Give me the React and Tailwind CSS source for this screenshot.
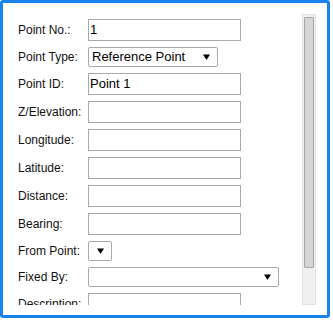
import React from 'react';

// small select arrow, like the native windows one
const Arrow = () => (
    <svg width="7" height="6" viewBox="0 0 7 6" className="shrink-0">
        <polygon points="0,0.5 7,0.5 3.5,6" fill="#000" />
    </svg>
);

const TextBox = ({ value = '', width = 'w-[153px]' }) => (
    <div className={`${width} h-[22px] border border-[#a9a9a9] bg-white pl-[1px] flex items-center text-[13px] text-black`}>
        {value}
    </div>
);

const SelectBox = ({ value = '', width }) => (
    <div className={`${width} h-[20px] border border-[#a9a9a9] rounded-[2px] bg-white pl-[3px] pr-[7px] flex items-center justify-between text-[13px] text-black`}>
        <span>{value}</span>
        <Arrow />
    </div>
);

const fields = [
    { label: 'Point No.:', kind: 'text', value: '1' },
    { label: 'Point Type:', kind: 'select', value: 'Reference Point', width: 'w-[130px]' },
    { label: 'Point ID:', kind: 'text', value: 'Point 1' },
    { label: 'Z/Elevation:', kind: 'text' },
    { label: 'Longitude:', kind: 'text' },
    { label: 'Latitude:', kind: 'text' },
    { label: 'Distance:', kind: 'text' },
    { label: 'Bearing:', kind: 'text' },
    { label: 'From Point:', kind: 'select', width: 'w-[24px]' },
    { label: 'Fixed By:', kind: 'select', width: 'w-[191px]' },
    { label: 'Description:', kind: 'text' },
];

const App = () => {
    return (
        <div className="w-[330px] h-[318px] border-[3px] border-[#1b84ec] rounded-[3px] bg-white pt-[11px] pb-[10px] pl-[15px] pr-[11px] flex" style={{ fontFamily: '"Liberation Sans", Arial, sans-serif' }}>
            {/* --- Form fields --- */}
            <div className="flex-1 overflow-hidden pt-[5px] flex flex-col gap-[6px]">
                {fields.map((f) => (
                    <div key={f.label} className="flex items-center shrink-0">
                        <span className="w-[70px] shrink-0 text-[12px] text-[#111] whitespace-nowrap">{f.label}</span>
                        {f.kind === 'text' ? (
                            <TextBox value={f.value} />
                        ) : (
                            <SelectBox value={f.value} width={f.width} />
                        )}
                    </div>
                ))}
            </div>

            {/* --- Scrollbar --- */}
            <div className="w-[14px] h-full border border-[#e2e2e2] bg-[#f0f0f0] px-[1px] pt-[2px] shrink-0">
                <div className="h-[251px] border border-[#a8a8a8] rounded-[1px] bg-[#d6d6d6]" />
            </div>
        </div>
    );
};

export default App;
